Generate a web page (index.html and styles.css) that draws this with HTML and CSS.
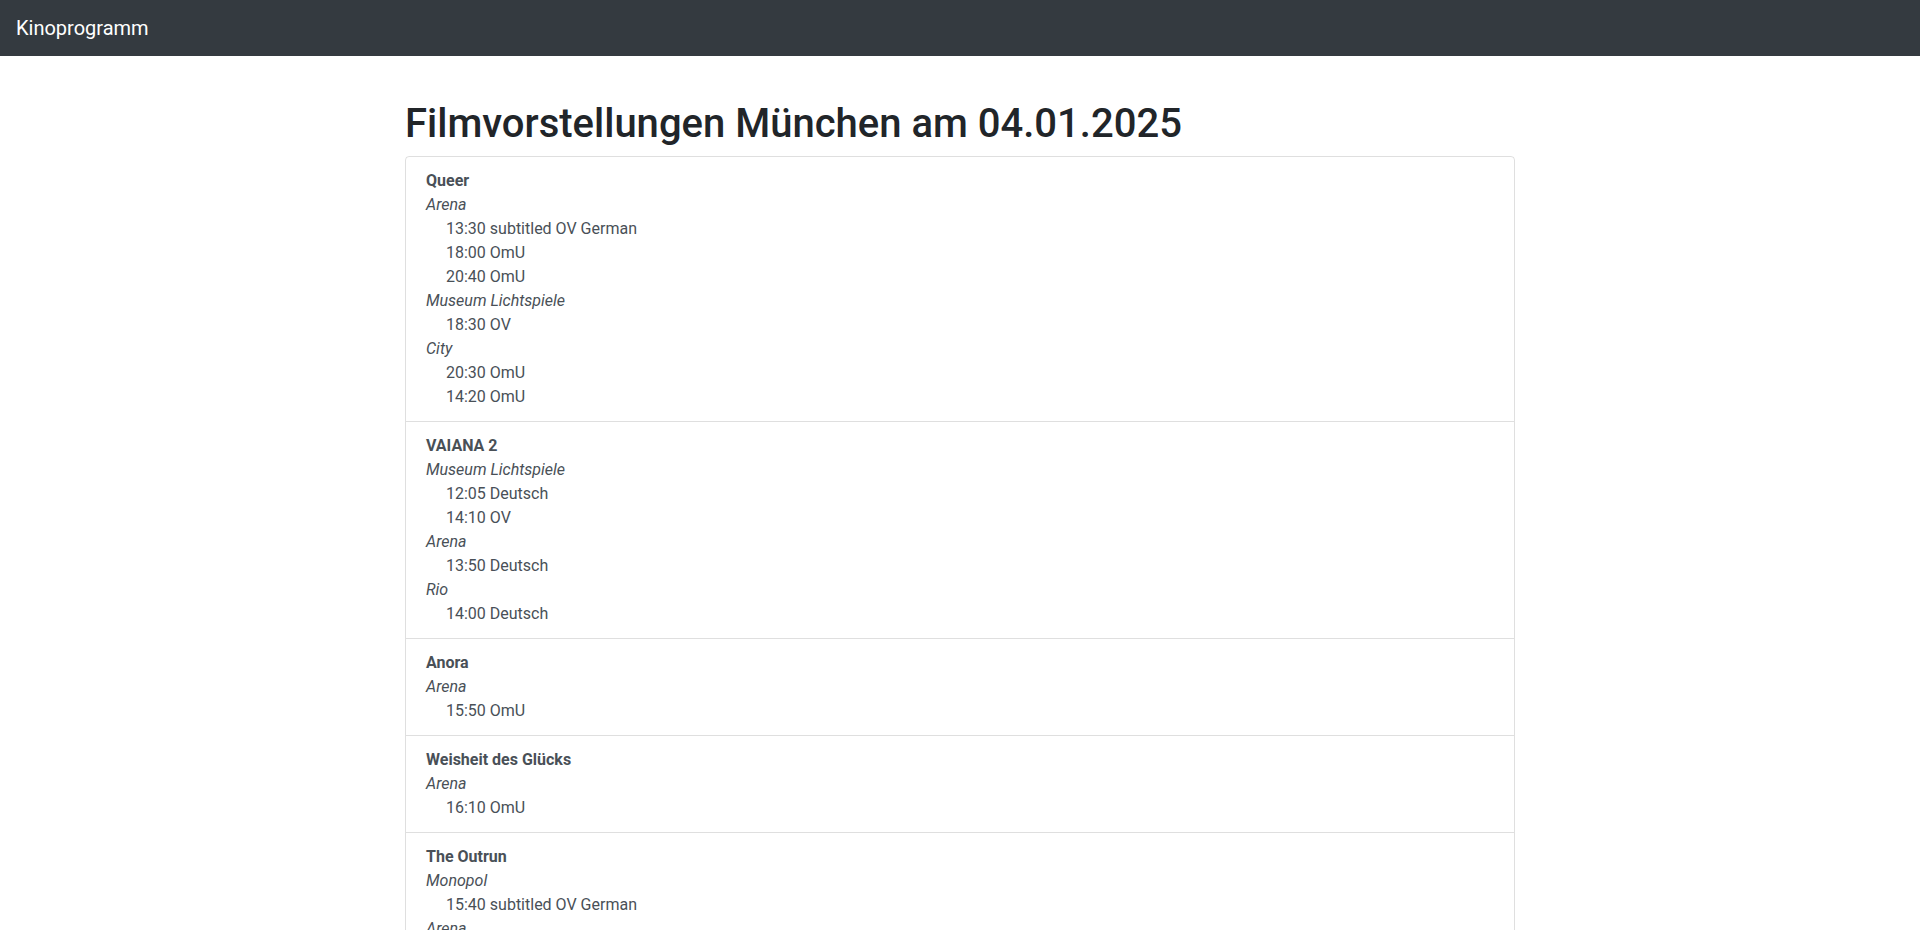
FILE: index.html
```html
<!DOCTYPE html>
<html lang="de">
<head>
<meta charset="utf-8">
<title>Kinoprogramm</title>
<link rel="stylesheet" href="styles.css">
</head>
<body>
<nav class="navbar">
  <a class="brand" href="#">Kinoprogramm</a>
</nav>
<main class="container">
  <h1 class="title">Filmvorstellungen München am 04.01.2025</h1>
  <div class="list-group">
    <div class="item">
      <div class="film">Queer</div>
      <div class="cinema">Arena</div>
      <div class="show">13:30 subtitled OV German</div>
      <div class="show">18:00 OmU</div>
      <div class="show">20:40 OmU</div>
      <div class="cinema">Museum Lichtspiele</div>
      <div class="show">18:30 OV</div>
      <div class="cinema">City</div>
      <div class="show">20:30 OmU</div>
      <div class="show">14:20 OmU</div>
    </div>
    <div class="item">
      <div class="film">VAIANA 2</div>
      <div class="cinema">Museum Lichtspiele</div>
      <div class="show">12:05 Deutsch</div>
      <div class="show">14:10 OV</div>
      <div class="cinema">Arena</div>
      <div class="show">13:50 Deutsch</div>
      <div class="cinema">Rio</div>
      <div class="show">14:00 Deutsch</div>
    </div>
    <div class="item">
      <div class="film">Anora</div>
      <div class="cinema">Arena</div>
      <div class="show">15:50 OmU</div>
    </div>
    <div class="item">
      <div class="film">Weisheit des Glücks</div>
      <div class="cinema">Arena</div>
      <div class="show">16:10 OmU</div>
    </div>
    <div class="item">
      <div class="film">The Outrun</div>
      <div class="cinema">Monopol</div>
      <div class="show">15:40 subtitled OV German</div>
      <div class="cinema">Arena</div>
      <div class="show">17:30 OmU</div>
    </div>
  </div>
</main>
</body>
</html>
```
FILE: styles.css
```css
* { box-sizing: border-box; }
body {
  margin: 0;
  font-family: Roboto, "Liberation Sans", sans-serif;
  font-size: 16px;
  line-height: 1.5;
  color: #212529;
  background: #fff;
}
.navbar {
  background: #343a40;
  padding: 8px 16px;
  display: flex;
  align-items: center;
}
.brand {
  color: #fff;
  text-decoration: none;
  font-size: 20px;
  line-height: 30px;
  padding: 5px 0;
}
.container {
  width: 1140px;
  margin: 0 auto;
  padding: 44px 15px 0;
}
.title {
  margin: 0 0 8px;
  font-size: 40px;
  font-weight: 500;
  line-height: 1.2;
  color: #212529;
}
.list-group {
  display: flex;
  flex-direction: column;
  border: 1px solid rgba(0,0,0,.125);
  border-radius: 4px;
}
.item {
  padding: 12px 20px;
  color: #495057;
  border-top: 1px solid rgba(0,0,0,.125);
}
.item:first-child { border-top: 0; }
.film { font-weight: 700; }
.cinema { font-style: italic; }
.show { padding-left: 20px; }
```
